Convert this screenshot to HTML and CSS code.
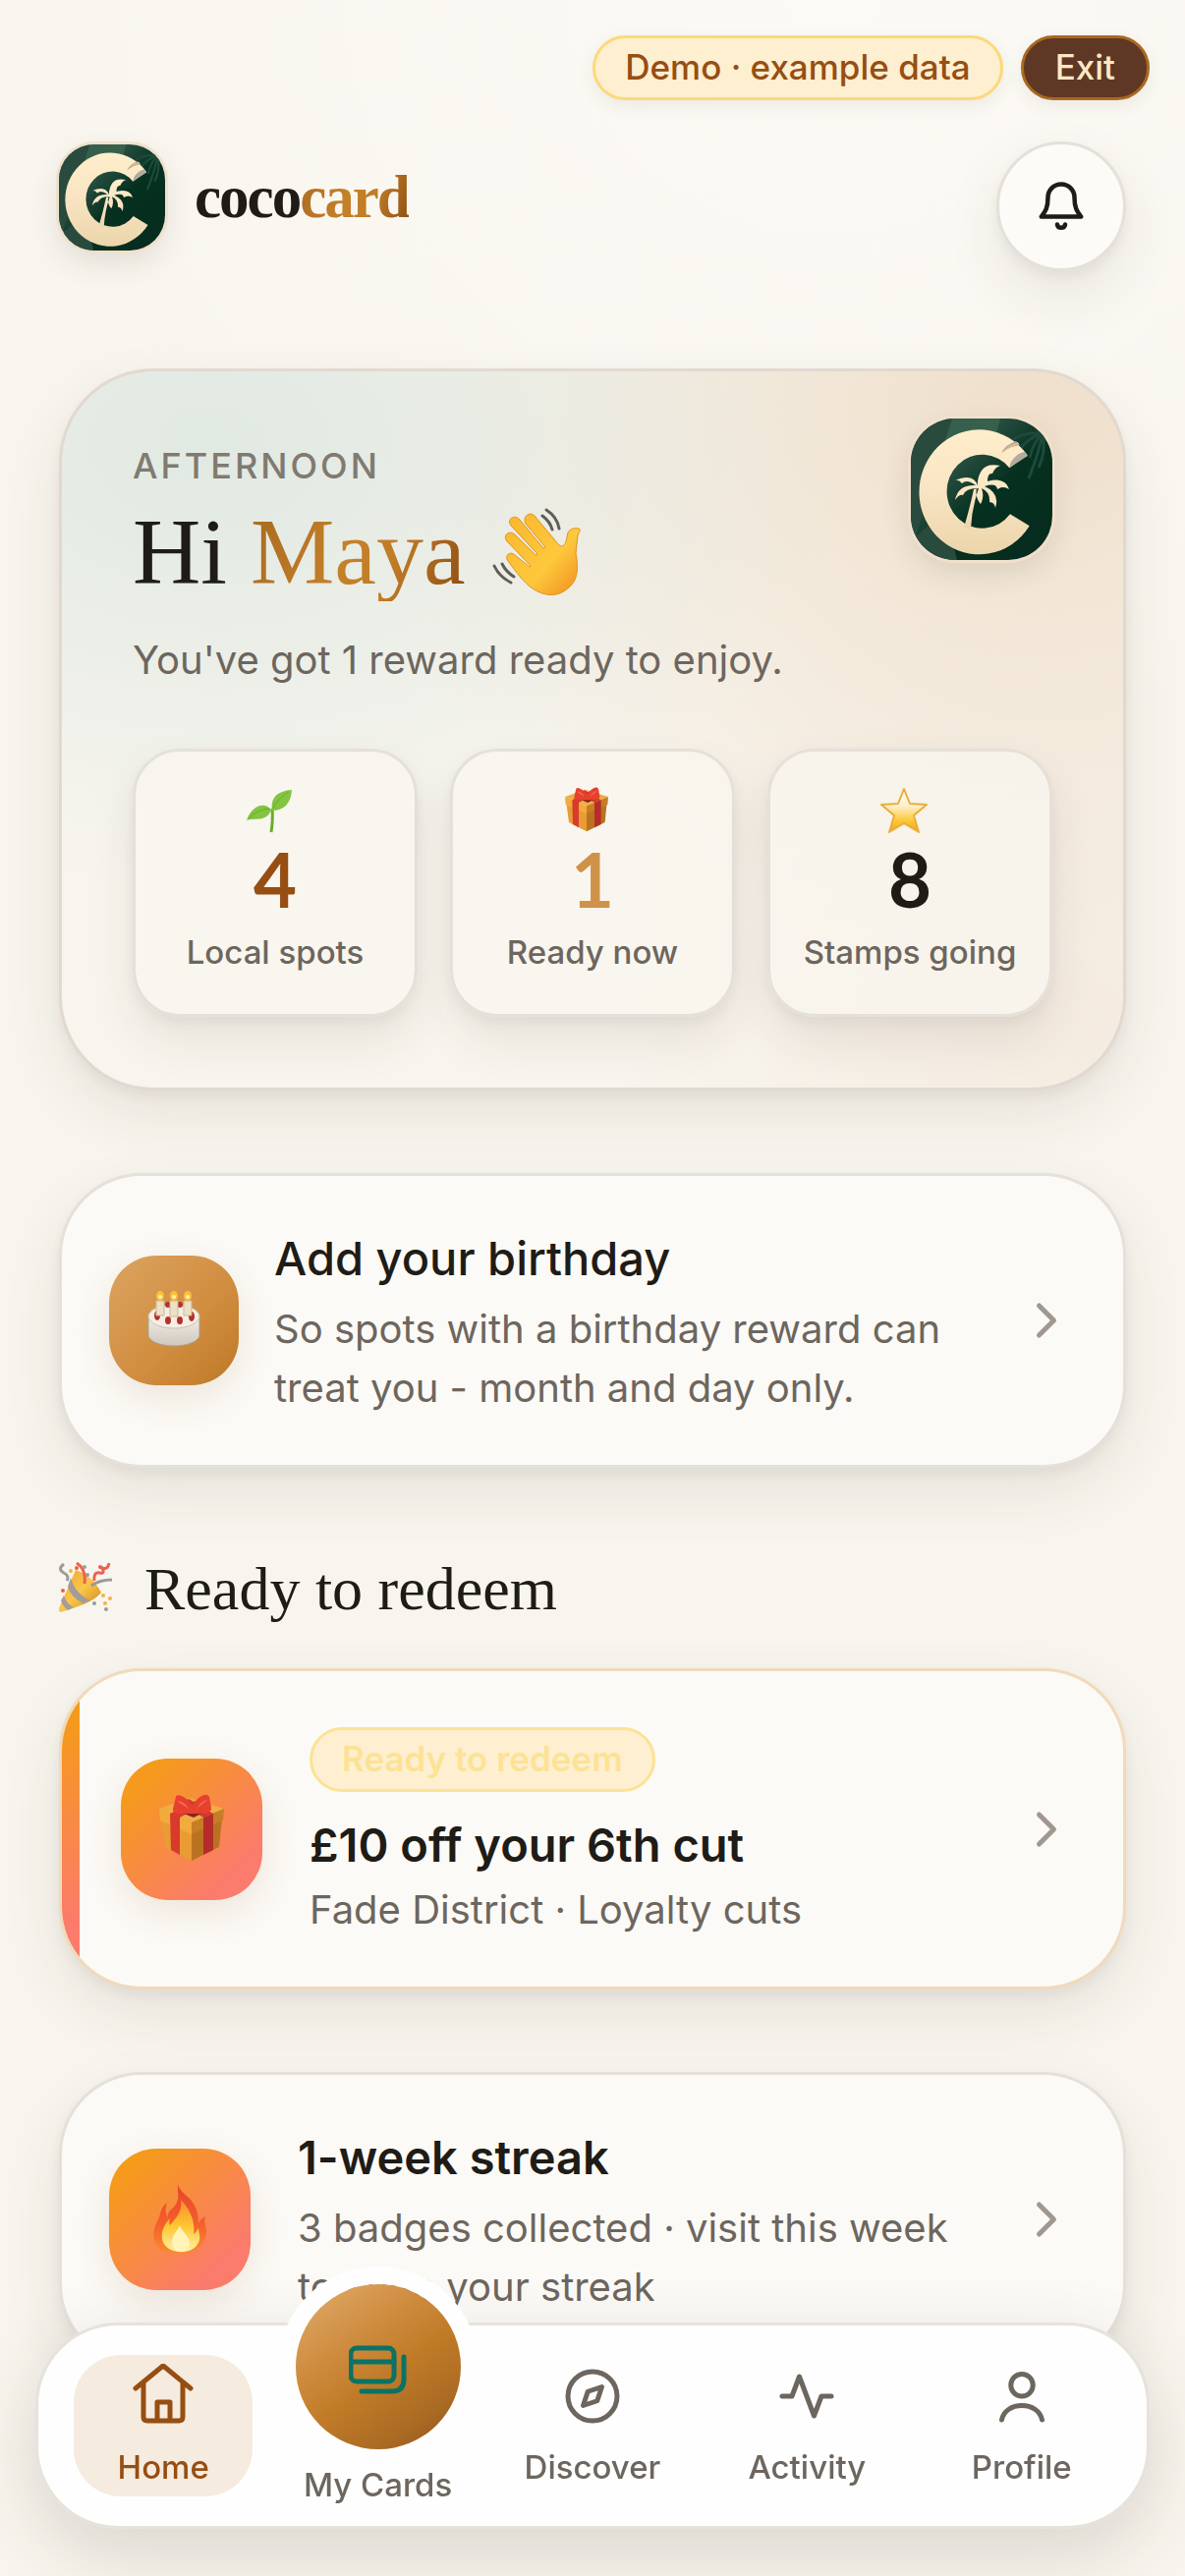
FILE: index.html
```html
<!DOCTYPE html>
<html lang="en">
<head>
<meta charset="utf-8">
<meta name="viewport" content="width=device-width, initial-scale=1">
<title>cococard</title>
<link rel="stylesheet" href="styles.css">
</head>
<body>
<svg class="defs" aria-hidden="true">
  <defs>
    <linearGradient id="cream" x1="0" y1="0" x2="0" y2="1"><stop offset="0" stop-color="#ffeecb"/><stop offset=".5" stop-color="#f8e4c2"/><stop offset="1" stop-color="#ecd5ab"/></linearGradient>
    <linearGradient id="jungle" x1="0" y1="0" x2="1" y2="1"><stop offset="0" stop-color="#1d4437"/><stop offset=".3" stop-color="#2a5245"/><stop offset=".55" stop-color="#06301f"/><stop offset="1" stop-color="#052b1e"/></linearGradient>
    <linearGradient id="skin" x1="0" y1="0" x2="1" y2="1"><stop offset="0" stop-color="#f9b62f"/><stop offset=".6" stop-color="#fdc83c"/><stop offset="1" stop-color="#f08c1c"/></linearGradient>
    <linearGradient id="starfill" x1="0" y1="0" x2="0" y2="1"><stop offset="0" stop-color="#fff"/><stop offset=".4" stop-color="#fdeecb"/><stop offset=".75" stop-color="#fcc630"/><stop offset="1" stop-color="#f0a326"/></linearGradient>
    <linearGradient id="flameout" x1="0" y1="0" x2="0" y2="1"><stop offset="0" stop-color="#e8432a"/><stop offset=".6" stop-color="#f4622c"/><stop offset="1" stop-color="#fb8c2d"/></linearGradient>
    <linearGradient id="flamein" x1="0" y1="0" x2="0" y2="1"><stop offset="0" stop-color="#fb8a30"/><stop offset=".5" stop-color="#fdc62f"/><stop offset="1" stop-color="#fff1a8"/></linearGradient>
    <linearGradient id="icing" x1="0" y1="0" x2="0" y2="1"><stop offset="0" stop-color="#f3eee6"/><stop offset="1" stop-color="#cdc7bd"/></linearGradient>
    <linearGradient id="cone" x1="0" y1="0" x2="1" y2="1"><stop offset="0" stop-color="#e9a52c"/><stop offset=".5" stop-color="#fbc64a"/><stop offset="1" stop-color="#c98213"/></linearGradient>
  </defs>
  <symbol id="logo" viewBox="0 0 144 144">
    <path fill="url(#jungle)" d="M0 0h144v144H0z"/>
    <path fill="#284b3e" d="M0 0h42L5 120l-5 10zM5 120l30-26 12 50H8z"/>
    <path fill="#3b6450" opacity=".8" d="M42 0h49l-9 36H30z"/>
    <g fill="none" stroke="#1d4a3a" stroke-width="3"><path d="M134 15q-20-2-32 8M134 15q-16 5-24 18M134 15q-10 10-13 25M134 15q-3 18-14 46M134 15q4 18-4 35"/></g>
    <path fill="url(#cream)" d="M118.700 37.300A61 63.500 0 1 0 120.700 109.300L101 97.300A36 37.500 0 1 1 100.300 50.300Z"/>
    <path fill="#b3aaa0" d="M92 35q5-9 15-12l4 4q-10 1-19 8zM100 50l2-6q7-10 14-10l3 4z"/>
    <path fill="#d9bb8c" d="M93 35q7-6 17-9l-1-2q-9 2-16 11z"/>
    <path fill="url(#cream)" d="M54 111q6-20 10-39l5-1q-7 20-8 41zM68 68q-5-13-23-5 4-1 7 3 5-5 14 2-18-1-21 15 4-6 8-5 3-7 14-7-2 9 4 16 4-7 1-16 9 4 8 14 5 0 6 6 5-15-11-22 12-4 13 3 6-4 12 0-4-13-22-8 0-9 5-8 3-7 8-8-14-3-19 5-3 4-4 11z"/>
  </symbol>
  <symbol id="gift" viewBox="0 0 72 72">
    <path fill="#e99c33" d="M5 24l31 15v29L9 54z"/><path fill="#b97320" d="M67 24L36 39v29l28-14z"/>
    <path fill="#efad45" d="M3 15l31-11 35 11-33 14z"/><path fill="#f2ab3c" d="M3 15l33 14v12L4 27z"/><path fill="#c67d25" d="M69 15L36 29v12l32-14z"/>
    <path fill="#d93a2c" d="M14 20l10 4v38l-9-5zM24 24l-10-4 26-13 9 3z"/><path fill="#b52c2a" d="M48 24l10-4v37l-10 5z"/><path fill="#cf3b2c" d="M58 20l-10 4L25 9l8-4z"/>
    <path fill="#e8402f" d="M35 18C27 22 15 19 17 15l3-12c1-5 14 2 17 10C40 4 51-3 54 3l2 11c1 6-11 7-18 4zM32 11h10v10H32z"/><path fill="#f4705c" d="M21 7q7 0 12 8M52 6q-6 1-11 9"/><path fill="#8d2321" d="M28 20h18l-8 4z"/>
  </symbol>
</svg>

<div class="demo-bar">
  <span class="pill pill-demo">Demo · example data</span>
  <button class="pill pill-exit" type="button">Exit</button>
</div>

<header class="top">
  <a class="brand" href="#">
    <svg class="logo logo-small" role="img" aria-label="cococard logo"><use href="#logo"/></svg>
    <span class="wordmark">coco<span class="gold">card</span></span>
  </a>
  <button class="bell" type="button" aria-label="Notifications">
    <svg class="icon-bell" viewBox="0 0 24 24"><path d="M6 8a6 6 0 0 1 12 0c0 6 2 7 3 8.700H3C4 15 6 14 6 8z"/><path d="M10.200 20.200c.4 2 3.200 2 3.600 0"/></svg>
  </button>
</header>

<main>
  <section class="hero">
    <div class="hero-head">
      <div class="hero-text">
        <p class="eyebrow">AFTERNOON</p>
        <h1>Hi <span class="gold">Maya</span>
          <svg class="wave" viewBox="0 0 120 120" role="img" aria-label="waving hand"><g fill="none" stroke="#5f5d58" stroke-width="3" stroke-linecap="round"><path d="M68 17q11 7 13 19M64 23q8 6 10 14M15 74q5 11 17 17M23 72q4 8 12 13"/></g><path fill="url(#skin)" stroke="#e2931e" d="M29 69c-4-5 2-11 7-6l15 12 1-1-24-25c-5-6 2-12 8-7l21 21 2-1-27-29c-5-7 4-12 9-6l24 29 2-1-20-24c-4-7 4-13 9-8l25 30c3 2 6 0 7-4l2-9c2-4 7-5 11-4 3 1 0 4-1 7l-2 18c2 10 4 26-7 35-14 13-30 7-41-2-9-8-15-17-21-25z"/></svg>
        </h1>
        <p class="lead">You've got 1 reward ready to enjoy.</p>
      </div>
      <svg class="logo logo-large" role="img" aria-label="cococard logo"><use href="#logo"/></svg>
    </div>
    <ul class="stats">
      <li class="stat">
        <svg class="stat-icon" viewBox="0 0 48 48"><path d="M26 46q2-13 1-24" fill="none" stroke="#6cab2d" stroke-width="3"/><path fill="#83c440" d="M27 24c-2-12 4-20 20-21-1 14-8 21-20 21zM26 24c-5-9-19-7-25 10 10-3 19 2 25-10z"/><path fill="none" stroke="#6cab2d" d="M28 22Q32 12 44 5M25 22q-12 0-22 10"/></svg>
        <strong class="num num-brown">4</strong><span class="stat-label">Local spots</span>
      </li>
      <li class="stat">
        <svg class="stat-icon"><use href="#gift"/></svg>
        <strong class="num num-gold">1</strong><span class="stat-label">Ready now</span>
      </li>
      <li class="stat">
        <svg class="stat-icon" viewBox="0 0 48 48"><path fill="url(#starfill)" stroke="#e9ae3c" stroke-width="2" stroke-linejoin="round" d="M24 2l6 15 17 1-13 11 5 17-15-9-15 9 5-17L1 18l17-1z"/></svg>
        <strong class="num">8</strong><span class="stat-label">Stamps going</span>
      </li>
    </ul>
  </section>

  <a class="card" href="#">
    <span class="tile tile-gold">
      <svg class="emoji-cake" viewBox="0 0 56 60"><path fill="url(#icing)" stroke="#a9a091" d="M2 27v19c2 6 13 10 26 10s24-4 26-10V27z"/><ellipse cx="28" cy="26" rx="26" ry="12" fill="#f4eee4" stroke="#c9c1b4"/><g fill="#b5302a"><circle cx="22" cy="14" r="3"/><circle cx="34" cy="14" r="3"/><ellipse cx="11" cy="25" rx="3" ry="5"/><ellipse cx="22" cy="30" rx="3" ry="4"/><ellipse cx="34" cy="30" rx="3" ry="4"/><ellipse cx="46" cy="26" rx="3" ry="5"/></g><path fill="#eee0c6" stroke="#cbb894" d="M10 10h8v15h-8zM24 10h8v16h-8zM38 10h8v15h-8z"/><g fill="#fbc03b"><ellipse cx="14" cy="5" rx="4" ry="5"/><ellipse cx="28" cy="5" rx="4" ry="5"/><ellipse cx="42" cy="5" rx="4" ry="5"/></g><g fill="#fff0a8"><circle cx="14" cy="6" r="2"/><circle cx="28" cy="6" r="2"/><circle cx="42" cy="6" r="2"/></g></svg>
    </span>
    <span class="card-text">
      <span class="card-title medium">Add your birthday</span>
      <span class="card-body">So spots with a birthday reward can treat you - month and day only.</span>
    </span>
    <svg class="chevron" viewBox="0 0 24 24"><path d="M9 18l6-6-6-6"/></svg>
  </a>

  <h2 class="section-title">
    <svg class="party" viewBox="0 0 54 54"><path fill="url(#cone)" d="M17 8C27 11 38 20 43 31c-8 10-26 15-41 20-3-1-3-3-1-6z"/><path fill="#a29d9a" d="M12 16q5 17 20 23l-7 3Q12 36 9 25zM5 34q3 9 10 12l-6 3q-5-4-7-10z"/><path fill="none" stroke="#9c9a98" stroke-width="3" d="M33 24q8-6 21-6M5 2q-7 5 0 9 6 3 3 8"/><path fill="none" stroke="#ee6151" stroke-width="3" d="M18 1q10 6 8 21M36 19q-1-10 6-8 5 1 2-5 6 2 7-5"/><g fill="#ee5c4d"><circle cx="42" cy="5" r="2"/><circle cx="4" cy="29" r="2"/><circle cx="18" cy="6" r="2"/></g><g fill="#9c9a98"><circle cx="26" cy="5" r="2"/><circle cx="29" cy="13" r="2"/><circle cx="36" cy="42" r="2"/><circle cx="48" cy="48" r="2"/></g><g fill="#f0b540"><circle cx="12" cy="9" r="2"/><circle cx="45" cy="34" r="2"/><circle cx="52" cy="37" r="2"/><circle cx="47" cy="42" r="2"/></g></svg>
    Ready to redeem
  </h2>

  <a class="card card-reward" href="#">
    <span class="tile tile-sunset"><svg class="emoji-gift"><use href="#gift"/></svg></span>
    <span class="card-text">
      <span class="pill pill-ready">Ready to redeem</span>
      <span class="card-title">£10 off your 6th cut</span>
      <span class="card-body">Fade District · Loyalty cuts</span>
    </span>
    <svg class="chevron" viewBox="0 0 24 24"><path d="M9 18l6-6-6-6"/></svg>
  </a>

  <a class="card card-streak" href="#">
    <span class="tile tile-sunset">
      <svg class="emoji-flame" viewBox="0 0 56 72"><path fill="url(#flameout)" d="M26 0c-1 12 4 16-7 26-3 3-4 6-3 9-3-5-3-10-1-16-7 5-6 11-9 17C2 43-1 53 4 61c5 8 14 10 23 10 15 0 27-7 28-22 0-6-3-10-1-16-4 2-6 4-7 8 0-10-1-16-8-25C33 10 27 6 26 0z"/><path fill="url(#flamein)" d="M29 16c2 12-5 19-11 26-1-2-1-4 0-7-7 7-11 18-6 26 8 12 32 11 36-4 1-5-1-8-1-12-2 3-3 5-5 6 2-13-4-26-13-35z"/><path fill="#fff3b8" d="M28 42c-3 7-9 11-8 19 2 10 16 10 18 1 1-8-7-12-10-20z"/></svg>
    </span>
    <span class="card-text">
      <span class="card-title">1-week streak</span>
      <span class="card-body">3 badges collected · visit this week to keep your streak</span>
    </span>
    <svg class="chevron" viewBox="0 0 24 24"><path d="M9 18l6-6-6-6"/></svg>
  </a>
</main>

<nav class="tabs" aria-label="Main">
  <a class="tab active" href="#">
    <span class="slot"><svg class="icon-home" viewBox="0 0 66 66"><path d="M5 25L33 2l28 23M13 20v34q0 4 4 4h32q4 0 4-4V20M27 58V39h13v19"/></svg></span>
    <span>Home</span>
  </a>
  <a class="tab tab-cards" href="#">
    <span class="disc"><svg class="icon-cards" viewBox="0 0 60 60"><rect x="2" y="11" width="44" height="34" rx="6"/><path d="M2 25h44M56 20v23q0 12-12 12H13"/></svg></span>
    <span>My Cards</span>
  </a>
  <a class="tab" href="#">
    <span class="slot"><svg class="icon-tab" viewBox="0 0 24 24"><circle cx="12" cy="12" r="10"/><path d="M15.800 8.200l-1.900 5.700-5.700 1.900 1.900-5.700z"/></svg></span>
    <span>Discover</span>
  </a>
  <a class="tab" href="#">
    <span class="slot"><svg class="icon-tab" viewBox="0 0 24 24"><path d="M22 12h-4l-3 8L9 4l-3 8H2"/></svg></span>
    <span>Activity</span>
  </a>
  <a class="tab" href="#">
    <span class="slot"><svg class="icon-tab" viewBox="0 0 24 24"><circle cx="12" cy="7.500" r="4.500"/><path d="M3.800 21.600c.8-3.700 4.200-5.800 8.200-5.800s7.400 2.100 8.200 5.800"/></svg></span>
    <span>Profile</span>
  </a>
</nav>
</body>
</html>
```
FILE: styles.css
```css
:root {
  --ink: #1f1c17;
  --muted: #6d665e;
  --brown: #964e12;
  --line: #e5e0d9;
  --surface: #fcfaf6;
  --gold-text: linear-gradient(110deg, #a86a20 0%, #c5802a 45%, #c17c27 65%, #8c4c12 100%);
  --lift: 0 6px 12px rgba(60, 48, 36, .06), 0 24px 60px rgba(60, 48, 36, .09);
  --sans: Inter, "Noto Sans", sans-serif;
  --display: "Liberation Serif", serif;
}

* { box-sizing: border-box; }

body {
  margin: 0;
  min-height: 100vh;
  padding: 36px 60px 213px;
  background: radial-gradient(ellipse 900px 800px at 70% 0, #fcfaf5, rgba(252, 250, 245, 0)), #f8f5ee;
  color: var(--ink);
  font-family: var(--sans);
}

a { color: inherit; text-decoration: none; }
button { font: inherit; padding: 0; cursor: pointer; }
p, h1, h2, ul { margin: 0; padding: 0; }
svg { display: block; flex: none; }
.defs { position: absolute; width: 0; height: 0; }

.gold {
  background: var(--gold-text);
  -webkit-background-clip: text;
  background-clip: text;
  color: transparent;
}

.pill {
  display: inline-flex;
  align-items: center;
  height: 66px;
  padding: 0 30px 3px;
  border: 3px solid;
  border-radius: 33px;
  font-size: 35px;
  line-height: 48px;
  font-weight: 500;
  white-space: nowrap;
}

.demo-bar {
  display: flex;
  justify-content: flex-end;
  gap: 18px;
  margin: 0 -24px 42px;
}
.demo-bar .pill { box-shadow: 0 6px 18px rgba(60, 48, 36, .08); }
.pill-demo { background: #fdefd0; border-color: #fcd978; color: var(--brown); }
.pill-exit { background: #5f3725; border-color: #a8691f; color: #fce9c3; padding: 0 32px 3px; }
.pill-ready { background: #fdefd0; border-color: #fde294; color: #fde294; font-weight: 600; }

.top { display: flex; justify-content: space-between; align-items: flex-start; margin-bottom: 99px; }
.brand { display: flex; align-items: center; gap: 30px; padding-top: 3px; }
.logo { box-shadow: 0 0 0 3px #f1e0cc, 0 12px 30px rgba(60, 48, 36, .12); }
.logo-small { width: 108px; height: 108px; border-radius: 36px; }
.logo-large { width: 144px; height: 144px; border-radius: 45px; }
.wordmark { font: 700 61px/72px var(--display); letter-spacing: -2px; }
.bell {
  display: grid;
  place-items: center;
  width: 132px;
  height: 132px;
  border: 3px solid var(--line);
  border-radius: 50%;
  background: #fcfbf7;
  color: var(--ink);
  box-shadow: var(--lift);
}
.icon-bell, .chevron, .icon-tab, .icon-home, .icon-cards {
  fill: none;
  stroke: currentColor;
  stroke-width: 2;
  stroke-linecap: round;
  stroke-linejoin: round;
}
.icon-bell { width: 54px; height: 54px; }

.hero {
  padding: 48px 72px 72px;
  border: 3px solid #e1d9d0;
  border-radius: 96px;
  background:
    radial-gradient(ellipse 60% 62% at 14% 10%, #e0e9e2, rgba(224, 233, 226, 0)),
    radial-gradient(ellipse 66% 75% at 92% 6%, #efdfcb, rgba(239, 223, 203, 0)),
    radial-gradient(ellipse 45% 70% at 96% 90%, #f5ebe0, rgba(245, 235, 224, 0)),
    #f8f5ee;
  box-shadow: var(--lift);
}
.hero-head { display: flex; justify-content: space-between; align-items: flex-start; }
.hero-text { padding-top: 24px; }
.eyebrow { font-size: 36px; line-height: 48px; font-weight: 500; letter-spacing: 3px; color: #807a70; }
h1 { display: flex; align-items: center; gap: 24px; margin: 14px 0 30px; font: 400 96px/100px var(--display); }
.wave { width: 120px; height: 120px; margin: -10px; }
.lead { font-size: 40px; line-height: 60px; color: var(--muted); }

.stats { display: grid; grid-template-columns: repeat(3, 1fr); gap: 33px; margin-top: 60px; list-style: none; }
.stat {
  display: flex;
  flex-direction: column;
  align-items: center;
  padding: 36px 12px 39px;
  border: 3px solid var(--line);
  border-radius: 48px;
  background: rgba(249, 246, 240, .7);
  box-shadow: 0 6px 12px rgba(60, 48, 36, .05), 0 24px 48px rgba(60, 48, 36, .09);
}
.stat-icon { width: 48px; height: 48px; margin-right: 12px; }
.num { margin-top: 4px; font: 700 76px/84px Lato, sans-serif; }
.num-brown { color: var(--brown); }
.num-gold { color: #d0924a; }
.stat-label { margin-top: 8px; font-size: 33px; line-height: 48px; font-weight: 500; color: var(--muted); white-space: nowrap; }

.card {
  position: relative;
  display: flex;
  align-items: center;
  gap: 36px;
  margin-top: 84px;
  padding: 48px;
  border: 3px solid var(--line);
  border-radius: 84px;
  background: var(--surface);
  box-shadow: var(--lift);
  overflow: hidden;
}
.card-text { display: flex; flex: 1; flex-direction: column; align-items: flex-start; padding-top: 6px; }
.card-title { font-size: 47px; line-height: 60px; font-weight: 600; }
.card-title.medium { font-weight: 500; }
.card-body { margin-top: 12px; font-size: 40px; line-height: 60px; color: var(--muted); }
.chevron { width: 60px; height: 60px; color: #a09890; }

.tile { display: grid; place-items: center; flex: none; width: 144px; height: 144px; border-radius: 48px; box-shadow: 0 12px 36px rgba(120, 70, 20, .12); }
.tile-gold { width: 132px; height: 132px; background: linear-gradient(135deg, #dca460, #d08c3e 60%, #bd7826); }
.tile-sunset { background: linear-gradient(135deg, #f59a1c 15%, #fb7b6c 80%); }
.emoji-cake { width: 56px; height: 60px; }
.emoji-gift { width: 72px; height: 72px; }
.emoji-flame { width: 56px; height: 72px; }

.section-title { display: flex; align-items: center; gap: 33px; margin-top: 87px; font: 400 62px/72px var(--display); }
.party { width: 54px; height: 54px; }

.card-reward { gap: 48px; margin-top: 45px; padding-left: 60px; border-color: #f0dabb; }
.card-reward::before {
  content: "";
  position: absolute;
  inset: 0 auto 0 0;
  width: 18px;
  background: linear-gradient(#f59a1c 15%, #fb7b6c 80%);
}
.card-reward .card-text { padding-top: 9px; }
.card-reward .card-title { margin-top: 24px; }
.card-reward .card-body { margin-top: 6px; }
.card-streak { gap: 48px; }

.tabs {
  position: fixed;
  left: 36px;
  right: 36px;
  bottom: 48px;
  display: grid;
  grid-template-columns: repeat(5, 1fr);
  align-items: start;
  gap: 36px;
  padding: 30px 36px;
  border: 3px solid #e5e3db;
  border-radius: 84px;
  background: #fefefe;
  box-shadow: 0 24px 72px rgba(60, 48, 36, .16);
}
.tab {
  display: flex;
  flex-direction: column;
  align-items: center;
  gap: 18px;
  height: 144px;
  padding-top: 9px;
  border-radius: 48px;
  font-size: 33px;
  line-height: 42px;
  font-weight: 500;
  color: var(--muted);
  white-space: nowrap;
}
.tab.active { background: #f5ebdf; color: var(--brown); }
.slot { display: grid; place-items: center; width: 66px; height: 66px; }
.icon-tab { width: 60px; height: 60px; }
.icon-home { width: 66px; height: 66px; stroke-width: 5; }
.tab-cards { gap: 15px; height: 216px; margin-top: -72px; padding-top: 0; }
.disc {
  display: grid;
  place-items: center;
  flex: none;
  width: 168px;
  height: 168px;
  border-radius: 50%;
  background: linear-gradient(145deg, #dca460 10%, #ce8b3e 35%, #c17b27 55%, #a96a24 80%, #8f5118);
  box-shadow: 0 0 0 18px #fefefe;
  color: #0b7265;
}
.icon-cards { width: 60px; height: 60px; stroke-width: 5; }
```
